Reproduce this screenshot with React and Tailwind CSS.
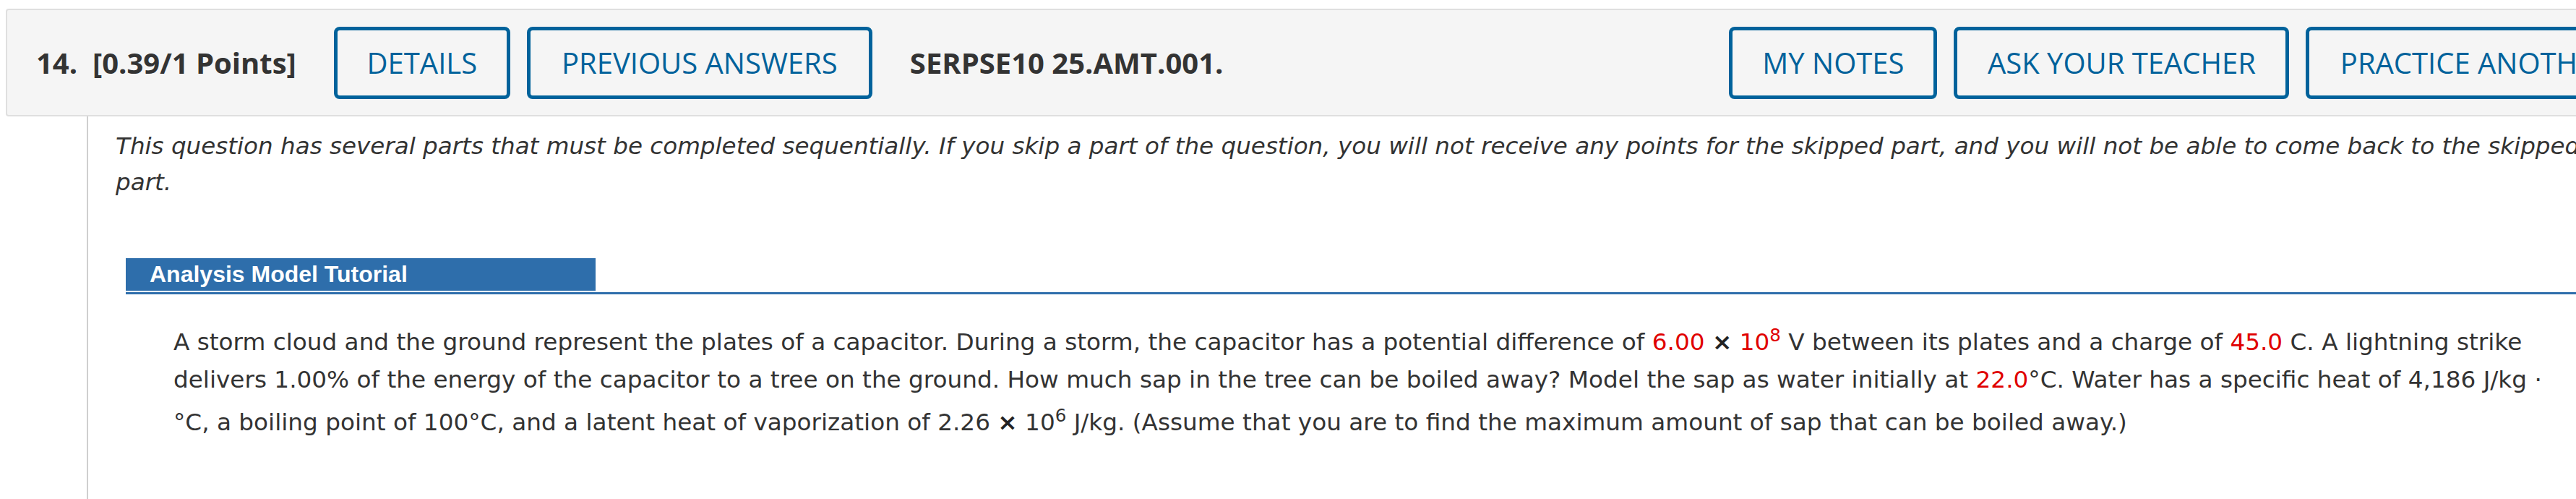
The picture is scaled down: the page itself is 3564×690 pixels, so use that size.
import React from "react";

const openSans = { fontFamily: "'Open Sans', 'Liberation Sans', sans-serif" };

function HeadButton({ label, width }) {
  return (
    <div
      className={`h-[100px] ${width} flex items-center justify-center border-[5px] border-[#00629b] rounded-[8px] text-[40px] font-medium text-[#00629b] whitespace-nowrap`}
    >
      {label}
    </div>
  );
}

const Red = ({ children }) => <span className="text-[#e00000]">{children}</span>;

export default function App() {
  return (
    <div
      className="w-[3564px] h-[690px] overflow-hidden bg-white"
      style={openSans}
    >
      {/* question header bar */}
      <div className="ml-[8px] mt-[12px] w-[3700px] h-[149px] border-2 border-[#dfdfdf] rounded-[4px] bg-[#f5f5f5] flex items-center pl-[40px]">
        <span className="font-bold text-[40px] text-[#333] whitespace-pre">
          14.  [0.39/1 Points]
        </span>
        <div className="ml-[52px] flex gap-[23px]">
          <HeadButton label="DETAILS" width="w-[244px]" />
          <HeadButton label="PREVIOUS ANSWERS" width="w-[478px]" />
        </div>
        <span className="ml-[52px] font-bold text-[40px] text-[#333] whitespace-nowrap">
          SERPSE10 25.AMT.001.
        </span>
        <div className="ml-[700px] flex gap-[23px]">
          <HeadButton label="MY NOTES" width="w-[288px]" />
          <HeadButton label="ASK YOUR TEACHER" width="w-[464px]" />
          <HeadButton label="PRACTICE ANOTHER" width="w-[470px]" />
        </div>
      </div>

      {/* question body */}
      <div className="h-[529px] ml-[120px] border-l-2 border-[#cfcfcf] pl-[38px]">
        <p
          className="pt-[16px] text-[32.6px] italic leading-[50px] text-[#333] whitespace-nowrap"
          style={{ fontFamily: "'DejaVu Sans', Verdana, sans-serif" }}
        >
          This question has several parts that must be completed sequentially. If you skip a part of the question, you will not receive any points for the skipped part, and you will not be able to come back to the skipped
          <br />
          part.
        </p>

        <div className="mt-[80px] ml-[14px] border-b-[3px] border-[#2e6eab]">
          <div
            className="w-[650px] h-[45px] mb-[2px] bg-[#2e6eab] pl-[33px] text-white font-bold text-[32px] leading-[45px]"
            style={{ fontFamily: "'Liberation Sans', Arial, sans-serif" }}
          >
            Analysis Model Tutorial
          </div>
        </div>

        <div
          className="mt-[40px] ml-[80px] text-[32.7px] leading-[52px] text-[#333] whitespace-nowrap"
          style={{ fontFamily: "'DejaVu Sans', Verdana, sans-serif" }}
        >
          <div>
            A storm cloud and the ground represent the plates of a capacitor. During a storm, the capacitor has a potential difference of{" "}
            <Red>6.00</Red> <b className="text-[#222]">×</b> <Red>10<sup>8</sup></Red> V between its plates and a charge of{" "}
            <Red>45.0</Red> C. A lightning strike
          </div>
          <div>
            delivers 1.00% of the energy of the capacitor to a tree on the ground. How much sap in the tree can be boiled away? Model the sap as water initially at{" "}
            <Red>22.0</Red>°C. Water has a specific heat of 4,186 J/kg ·
          </div>
          <div className="mt-[7px]">
            °C, a boiling point of 100°C, and a latent heat of vaporization of 2.26 <b className="text-[#222]">×</b> 10<sup>6</sup> J/kg. (Assume that you are to find the maximum amount of sap that can be boiled away.)
          </div>
        </div>
      </div>
    </div>
  );
}
